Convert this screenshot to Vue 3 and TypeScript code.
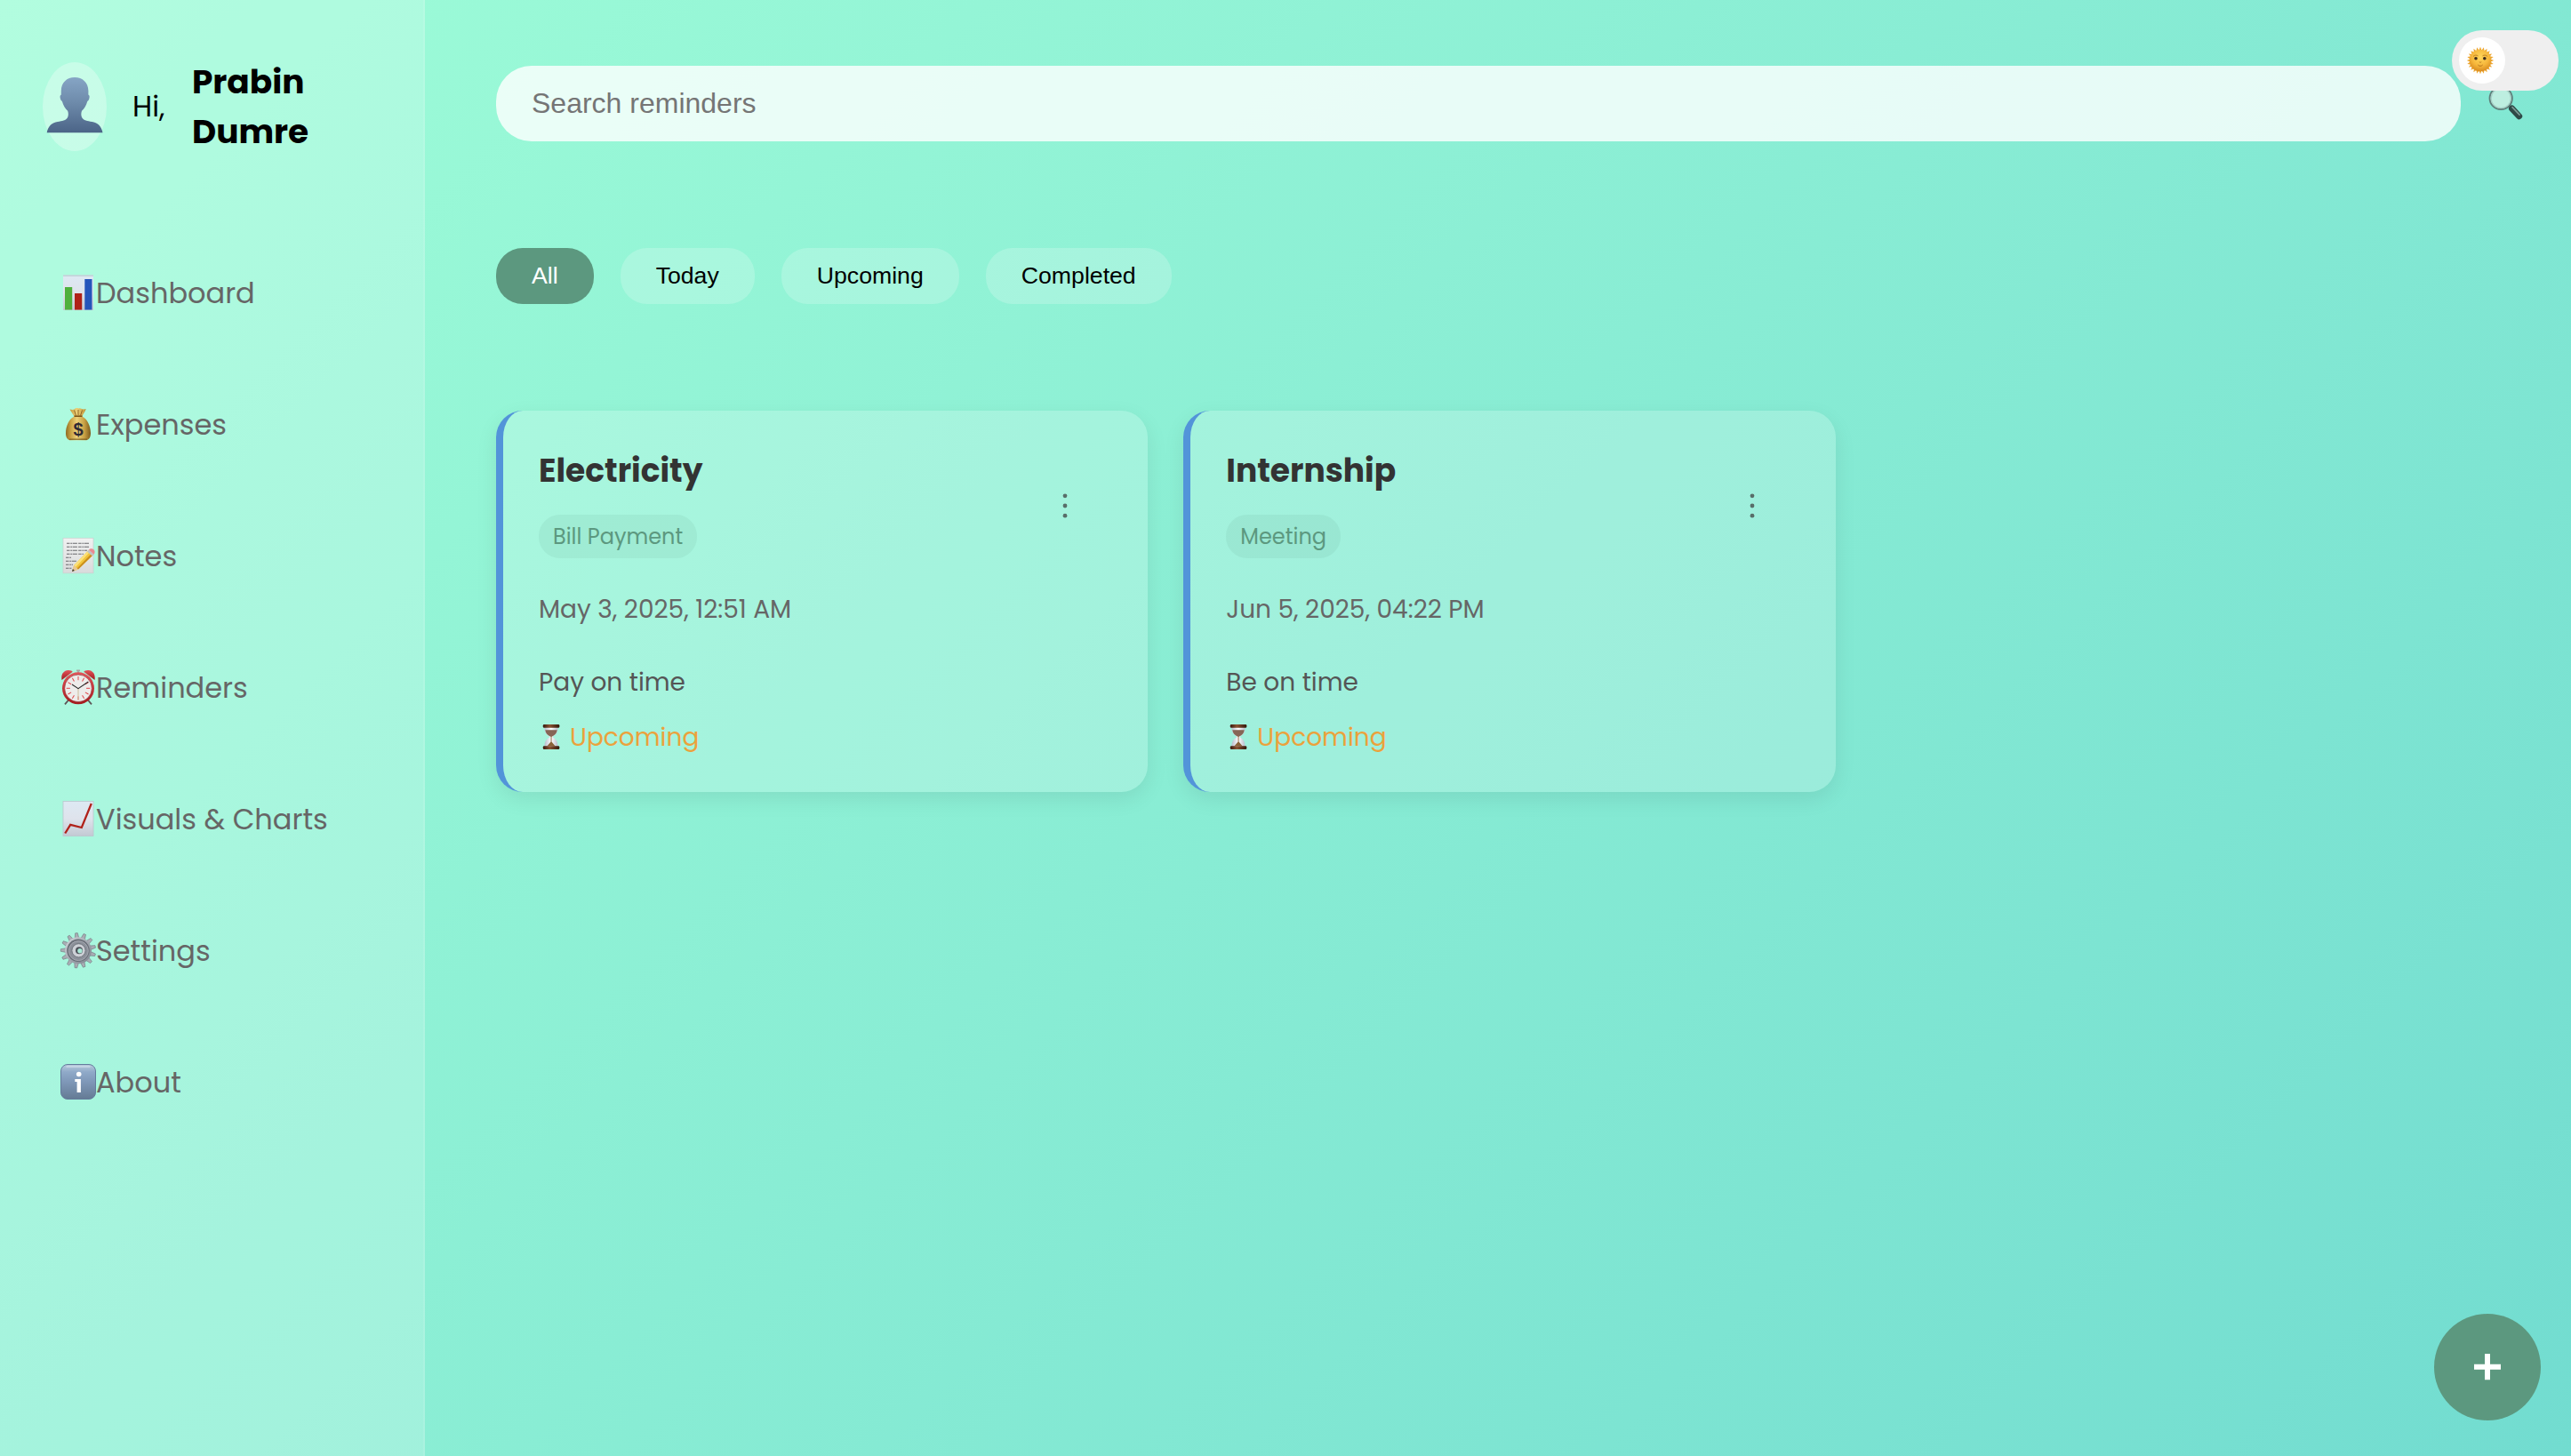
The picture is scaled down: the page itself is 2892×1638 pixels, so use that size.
<script setup lang="ts">
import { ref } from 'vue'

interface NavItem { icon: string; label: string }
interface Reminder { title: string; tag: string; date: string; note: string }

const nav: NavItem[] = [
  { icon: 'dashboard', label: 'Dashboard' },
  { icon: 'expenses', label: 'Expenses' },
  { icon: 'notes', label: 'Notes' },
  { icon: 'reminders', label: 'Reminders' },
  { icon: 'charts', label: 'Visuals & Charts' },
  { icon: 'settings', label: 'Settings' },
  { icon: 'about', label: 'About' },
]

const filters = ['All', 'Today', 'Upcoming', 'Completed']
const active = ref('All')

const reminders: Reminder[] = [
  { title: 'Electricity', tag: 'Bill Payment', date: 'May 3, 2025, 12:51 AM', note: 'Pay on time' },
  { title: 'Internship', tag: 'Meeting', date: 'Jun 5, 2025, 04:22 PM', note: 'Be on time' },
]

const teeth = Array.from({ length: 13 }, (_, i) => (i * 360) / 13 - 6)
const ticks = Array.from({ length: 12 }, (_, i) => i * 30)
const rays = Array.from({ length: 24 }, (_, i) => i * 15)
</script>

<template>
  <div class="app">
    <svg class="defs" width="0" height="0" aria-hidden="true">
      <defs>
        <linearGradient id="paper" x1="0" y1="0" x2="0" y2="1">
          <stop offset="0" stop-color="#dde9f3" /><stop offset=".5" stop-color="#dfe3ec" /><stop offset="1" stop-color="#c3c9d3" />
        </linearGradient>
        <linearGradient id="sheet" x1="0" y1="0" x2="0" y2="1">
          <stop offset="0" stop-color="#f1f1f1" /><stop offset="1" stop-color="#d9dadb" />
        </linearGradient>
        <linearGradient id="person" x1="0" y1="0" x2="0" y2="1">
          <stop offset="0" stop-color="#86a5c5" /><stop offset=".45" stop-color="#6e8bab" /><stop offset="1" stop-color="#4b6487" />
        </linearGradient>
        <linearGradient id="info" x1="0" y1="0" x2="0" y2="1">
          <stop offset="0" stop-color="#b9cbdd" /><stop offset=".22" stop-color="#8fa9c8" /><stop offset=".5" stop-color="#7f98b8" /><stop offset="1" stop-color="#647a94" />
        </linearGradient>
        <linearGradient id="bag" x1="0" y1="0" x2="1" y2="0">
          <stop offset="0" stop-color="#8f6a22" /><stop offset=".2" stop-color="#c9a244" /><stop offset=".45" stop-color="#ecd078" /><stop offset=".75" stop-color="#c79f43" /><stop offset="1" stop-color="#7c5a1c" />
        </linearGradient>
        <linearGradient id="red" x1="0" y1="0" x2="0" y2="1">
          <stop offset="0" stop-color="#e2555b" /><stop offset="1" stop-color="#a3191d" />
        </linearGradient>
        <linearGradient id="steel" x1="0" y1="0" x2="1" y2="1">
          <stop offset="0" stop-color="#d5d8dd" /><stop offset=".5" stop-color="#a4a9b1" /><stop offset="1" stop-color="#7c828c" />
        </linearGradient>
        <linearGradient id="wood" x1="0" y1="0" x2="1" y2="0">
          <stop offset="0" stop-color="#38190d" /><stop offset=".4" stop-color="#8a5232" /><stop offset="1" stop-color="#33170a" />
        </linearGradient>
        <linearGradient id="glass" x1="0" y1="0" x2="1" y2="0">
          <stop offset="0" stop-color="#b9bccb" /><stop offset=".5" stop-color="#ffffff" /><stop offset="1" stop-color="#b9bccb" />
        </linearGradient>
        <radialGradient id="sunFace" cx=".5" cy=".35" r=".65">
          <stop offset="0" stop-color="#ffd75c" /><stop offset=".6" stop-color="#f6b73c" /><stop offset="1" stop-color="#d98b1f" />
        </radialGradient>
      </defs>
    </svg>

    <aside class="sidebar">
      <header class="profile">
        <div class="avatar">
          <svg width="64" height="64" viewBox="0 0 64 64">
            <path fill="url(#person)" d="M32 1C41 1 47.2 7 47.4 16c.1 2-.1 3.500.1 4.800 1.300.4 1.400 2.200.8 4.200-.5 1.800-1.200 2.600-2 2.900-1.200 4.600-3.600 8.200-6.300 10.900-.9 2.500-.9 5.200.2 7.400 1.600 3.200 6.200 3.900 11.300 4.800 6 1.200 10.500 4.300 12 12.300H.7c1.500-8 6-11.100 12-12.300 5.100-.9 9.700-1.600 11.300-4.800 1.100-2.200 1.100-4.900.2-7.400-2.700-2.700-5.100-6.300-6.300-10.900-.8-.3-1.500-1.100-2-2.900-.6-2-.5-3.800.8-4.200.2-1.300 0-2.800.1-4.800C17 7 23 1 32 1z" />
          </svg>
        </div>
        <span class="hi">Hi,</span>
        <strong class="name">Prabin Dumre</strong>
      </header>

      <nav class="nav">
        <a v-for="item in nav" :key="item.label" class="nav-item">
          <svg class="nav-icon" width="40" height="40" viewBox="0 0 40 40">
            <g v-if="item.icon === 'dashboard'">
              <rect x="3" y=".5" width="34" height="39.500" fill="url(#paper)" />
              <rect x="3" y=".5" width="34" height="1.200" fill="#b9c9cf" />
              <rect x="5" y="14" width="8.200" height="25.500" fill="#4fb03c" />
              <rect x="16" y="21" width="8.200" height="18.500" fill="#b02218" />
              <rect x="27.300" y="5" width="8.200" height="34.500" fill="#2555bb" />
            </g>
            <g v-else-if="item.icon === 'expenses'">
              <path fill="url(#bag)" d="M10.500 3.500c2 .4 3.500.7 5 0 1.500-1.300 3.500-1.800 5-1 1.800-.9 3 .5 4.500.8 1.300.3 2.700 0 3.700-.2-.8 3.200-3 5.500-4.400 8.400C30 14 33.800 22 34 30c.1 5-2 8-5 8.300H11.500C8 38.300 6 35 6 30.500 6 22 10 14 15.500 11.500 14 8.500 12 6.500 10.500 3.500z" />
              <path d="M15.500 11.200h9" stroke="#7a5316" stroke-width="1.600" />
              <path d="M15.500 4.500l2 6M20 4v6M24.500 4.500l-2 6" stroke="#8a5f20" stroke-width=".9" />
              <path d="M10 37.200h20" stroke="#6e5018" stroke-width="1.400" opacity=".7" />
              <text x="20" y="33" text-anchor="middle" font-family="Liberation Sans, sans-serif" font-weight="700" font-size="20" fill="#2d2833">$</text>
            </g>
            <g v-else-if="item.icon === 'notes'">
              <rect x="3" y=".3" width="34" height="39.500" fill="url(#sheet)" stroke="#c9cfce" stroke-width=".7" />
              <g stroke="#6a6a6e" stroke-width="1.100" stroke-dasharray="3.500 .8 2 .6 5 1.200" fill="none">
                <path d="M7 6.200h26M7 10.200h25M7 14.200h23M7 18.200h19M6 22.200h6M6 26.200h12M6 30.200h8M6 34.200h7" />
              </g>
              <path d="M13 38l2.200-7L31 14.500l5.500 5L20 35.500z" fill="#f2c53a" />
              <path d="M15.200 31L31 14.500l1.800 1.700L17 33z" fill="#fbe07a" />
              <path d="M18.600 34.500L34.700 18l1.800 1.500L20 35.500z" fill="#c98d1d" />
              <path d="M13 38l2.200-7 4.800 4.500z" fill="#e7c795" /><path d="M13 38l.9-2.900 2 1.900z" fill="#333" />
              <path d="M30 15.500l1.900-2 5.600 5.200-1.900 1.900z" fill="#bfc3c4" />
              <path d="M31.900 13.500c2-2 4.200-1.500 5.500-.2 1.500 1.400 1.800 3.600.1 5.400z" fill="#e98a90" />
            </g>
            <g v-else-if="item.icon === 'reminders'">
              <path d="M9.500 34L5 39.300M30.500 34l4.500 5.300" stroke="#5c5556" stroke-width="1.800" />
              <path d="M18 1.300h4M20 1v4" stroke="#a8a5a6" stroke-width="1.800" />
              <path d="M1.500 12C.5 6 3 1.500 8.500 1c2.500-.2 4.500.6 5.200 1.800zM38.500 12C39.500 6 37 1.500 31.500 1c-2.500-.2-4.500.6-5.200 1.800z" fill="url(#red)" />
              <circle cx="20" cy="21.300" r="18" fill="url(#red)" /><circle cx="20" cy="21.300" r="15.300" fill="#eeeceb" stroke="#8e2c2d" stroke-width=".6" />
              <path v-for="t in ticks" :key="t" d="M20 8v4.200" stroke="#e0474c" stroke-width="1" :transform="`rotate(${t} 20 21.300)`" />
              <path d="M20 21v13" stroke="#cfc3a2" stroke-width="1.100" />
              <path d="M13 17l7 4.700L31.300 14" stroke="#2b2b2b" stroke-width="1.100" fill="none" />
            </g>
            <g v-else-if="item.icon === 'charts'">
              <rect x="3" y=".5" width="34" height="39" fill="url(#paper)" stroke="#bcc5ce" stroke-width=".8" />
              <path d="M5.200 36.500L11.200 26.800 23.800 30 34.800 3" fill="none" stroke="#b0211a" stroke-width="2.300" />
            </g>
            <g v-else-if="item.icon === 'settings'">
              <path v-for="t in teeth" :key="t" d="M17.700 6.500l1-5.900h2.600l1 5.900z" fill="#a9adb4" stroke="#676b72" stroke-width=".5" :transform="`rotate(${t} 20 20.300)`" />
              <circle cx="20" cy="20.300" r="15" fill="url(#steel)" />
              <circle cx="20" cy="20.300" r="12.700" fill="#686d76" />
              <circle cx="20.300" cy="20.600" r="11" fill="#8b9099" stroke="#a9adb4" stroke-width=".9" />
              <circle cx="20.500" cy="20.300" r="7.600" fill="#cdd0d6" stroke="#5c6068" stroke-width=".7" />
              <circle cx="21" cy="20.300" r="4" fill="#4d525a" />
              <circle cx="21.900" cy="20.800" r="2.700" fill="#a9e8d6" />
            </g>
            <g v-else>
              <rect x=".5" y=".5" width="39" height="39" rx="7.500" fill="url(#info)" stroke="#647c9c" />
              <path d="M7 3h26" stroke="#d3dfeb" stroke-width="1.500" stroke-linecap="round" opacity=".8" />
              <circle cx="20.700" cy="11.500" r="2.800" fill="#fff" />
              <path d="M16.300 17h6.600v15h-4.300V20h-2.300z" fill="#fff" />
            </g>
          </svg>
          <span class="nav-label">{{ item.label }}</span>
        </a>
      </nav>
    </aside>

    <main class="main">
      <div class="search">
        <input class="search-input" type="text" placeholder="Search reminders" />
        <svg class="search-icon" width="40" height="40" viewBox="0 0 40 40">
          <path d="M23 21.500l3.500 3.500" stroke="#6b8c86" stroke-width="3" />
          <circle cx="15.200" cy="14.500" r="12.600" fill="#bdeee0" stroke="#5f7f7b" stroke-width="2" />
          <circle cx="15.200" cy="14.500" r="11.100" fill="none" stroke="#a4cfc5" stroke-width="1.200" />
          <path d="M27.500 26l8.200 8.800" stroke="#2f4947" stroke-width="7" stroke-linecap="round" />
          <path d="M28 24.600l8.100 8.500" stroke="#7d9a95" stroke-width="1.600" stroke-linecap="round" />
        </svg>
      </div>

      <div class="filters">
        <button v-for="f in filters" :key="f" class="filter" :class="{ active: f === active }" @click="active = f">{{ f }}</button>
      </div>

      <section class="cards">
        <article v-for="r in reminders" :key="r.title" class="card">
          <div class="card-head">
            <div class="card-title">
              <h3>{{ r.title }}</h3>
              <span class="tag">{{ r.tag }}</span>
            </div>
            <button class="menu" aria-label="Menu">
              <svg width="10" height="30" viewBox="0 0 10 30" fill="#586e69">
                <circle cx="5" cy="3.800" r="2.400" /><circle cx="5" cy="15" r="2.400" /><circle cx="5" cy="26.200" r="2.400" />
              </svg>
            </button>
          </div>
          <p class="date">{{ r.date }}</p>
          <p class="note">{{ r.note }}</p>
          <p class="status">
            <svg width="28" height="30" viewBox="0 0 28 30">
              <path d="M6.500 4h15c0 6-2 8.500-6.200 11 4.200 2.500 6.200 5 6.200 11h-15c0-6 2-8.500 6.200-11-4.200-2.500-6.200-5-6.200-11z" fill="url(#glass)" />
              <path d="M7.300 7.300h13.400c-.7 4-2.700 6-6.200 7.500h-1C10 13.300 8 11.300 7.300 7.300z" fill="#866656" />
              <path d="M13.600 14h.9v6.500l4 4.800h-9l4.100-4.800z" fill="#8a6238" />
              <rect x="4.800" y="1" width="18.500" height="3.700" rx="1.200" fill="url(#wood)" />
              <rect x="4.800" y="25.300" width="18.500" height="3.700" rx="1.200" fill="url(#wood)" />
            </svg>
            <span>Upcoming</span>
          </p>
        </article>
      </section>
    </main>

    <button class="theme" aria-label="Toggle theme">
      <span class="knob">
        <svg width="32" height="32" viewBox="0 0 32 32">
          <path v-for="a in rays" :key="a" d="M14.500 4.500L16 .8l1.500 3.700z" fill="#eda62f" :transform="`rotate(${a} 16 16)`" />
          <circle cx="16" cy="16" r="12.300" fill="url(#sunFace)" />
          <circle cx="11" cy="13.700" r="1.800" fill="#3d2a1a" /><circle cx="20.800" cy="13.700" r="1.800" fill="#3d2a1a" />
          <path d="M8 11.500c1.500-1.800 4-1.800 5.500-.6M18.500 10.900c1.500-1.200 4-1.200 5.500.6M15 17.500c.3 1.200 1.700 1.200 2 0" stroke="#b5741c" stroke-width=".9" fill="none" />
          <path d="M13.300 21c1.600 1.700 3.800 1.700 5.400 0" stroke="#b5741c" stroke-width="1" fill="none" />
        </svg>
      </span>
    </button>

    <button class="fab" aria-label="Add reminder">
      <svg width="30" height="30" viewBox="0 0 30 30"><path d="M12 0h6v11.700h12v6H18v11.600h-6V17.700H0v-6h12z" fill="#fff" /></svg>
    </button>
  </div>
</template>

<style>
body { margin: 0; }
</style>

<style scoped>
* { box-sizing: border-box; }
.app {
  position: relative;
  display: flex;
  height: 1638px;
  overflow: hidden;
  background: linear-gradient(135deg, #9ffdd8, #72dcd0);
  font-family: Poppins, Inter, sans-serif;
}
.defs { position: absolute; }
button { border: 0; padding: 0; background: none; font: inherit; }
p, h3 { margin: 0; }

.sidebar {
  flex: none;
  width: 478px;
  padding-top: 70px;
  background: rgba(255, 255, 255, .2);
  border-right: 2px solid rgba(255, 255, 255, .1);
}
.profile { display: flex; align-items: center; height: 100px; padding-left: 48px; margin-bottom: 86px; }
.avatar {
  display: flex;
  align-items: center;
  justify-content: center;
  width: 72px;
  height: 100px;
  border-radius: 50%;
  background: rgba(255, 255, 255, .3);
}
.avatar svg { display: block; margin-top: -4px; flex: none; }
.hi { width: 67px; margin-left: 29px; font-size: 32px; line-height: 48px; }
.name { width: 180px; margin-bottom: 1px; font-size: 37.44px; font-weight: 700; line-height: 56px; }

.nav { display: flex; flex-direction: column; }
.nav-item { display: flex; align-items: center; height: 148px; padding-left: 68px; color: #666; }
.nav-icon { display: block; flex: none; margin-top: -3px; overflow: visible; }
.nav-label { font-size: 32px; line-height: 48px; white-space: nowrap; }

.main { flex: 1; min-width: 0; padding: 74px 54px 0 80px; }
.search { display: flex; align-items: center; gap: 30px; height: 85px; }
.search-input {
  flex: 1;
  height: 85px;
  padding: 0 40px;
  border: 0;
  border-radius: 40px;
  outline: 0;
  background: rgba(255, 255, 255, .8);
  font: 32px "Liberation Sans", Arial, sans-serif;
}
.search-input::placeholder { color: #757575; }
.search-icon { flex: none; margin-top: -2px; }

.filters { display: flex; gap: 30px; margin-top: 120px; }
.filter {
  height: 63px;
  padding: 0 40px;
  border-radius: 30px;
  background: rgba(255, 255, 255, .2);
  color: #000;
  font: 26.667px "Liberation Sans", Arial, sans-serif;
}
.filter.active { background: #5c987f; color: #fff; }

.cards { display: grid; grid-template-columns: repeat(3, 1fr); gap: 40px; margin-top: 120px; }
.card {
  height: 429px;
  padding: 41px 40px 0;
  border-left: 8px solid #5294d9;
  border-radius: 30px;
  background: rgba(255, 255, 255, .2);
  box-shadow: 0 8px 24px rgba(0, 0, 0, .08);
}
.card-head { display: flex; align-items: center; height: 125px; }
.card-title { flex: 1; display: flex; flex-direction: column; align-items: flex-start; gap: 22px; }
h3 { color: #333; font-size: 36px; font-weight: 700; line-height: 54px; }
.tag {
  padding: 0 16px;
  border-radius: 24px;
  background: rgba(92, 152, 127, .1);
  color: #5c987f;
  font-size: 24px;
  line-height: 49px;
}
.menu { display: flex; justify-content: center; width: 107px; padding-top: 6px; }
.date { margin-top: 37px; color: #666; font-size: 28px; line-height: 42px; }
.note { margin-top: 40px; color: #555; font-size: 28px; line-height: 42px; }
.status {
  display: flex;
  align-items: center;
  gap: 7px;
  margin-top: 20px;
  color: #eba23c;
  font-size: 28px;
  line-height: 42px;
}
.status svg { flex: none; margin-top: -3px; }

.theme {
  position: absolute;
  top: 34px;
  right: 14px;
  display: flex;
  align-items: center;
  width: 120px;
  height: 68px;
  padding-left: 8px;
  border-radius: 34px;
  background: #efefef;
}
.knob {
  display: flex;
  align-items: center;
  padding-left: 8px;
  width: 52px;
  height: 52px;
  border-radius: 50%;
  background: #fff;
}
.knob svg { display: block; flex: none; }
.fab {
  position: absolute;
  right: 34px;
  bottom: 40px;
  display: flex;
  align-items: center;
  justify-content: center;
  width: 120px;
  height: 120px;
  border-radius: 50%;
  background: #5c987f;
}
</style>
